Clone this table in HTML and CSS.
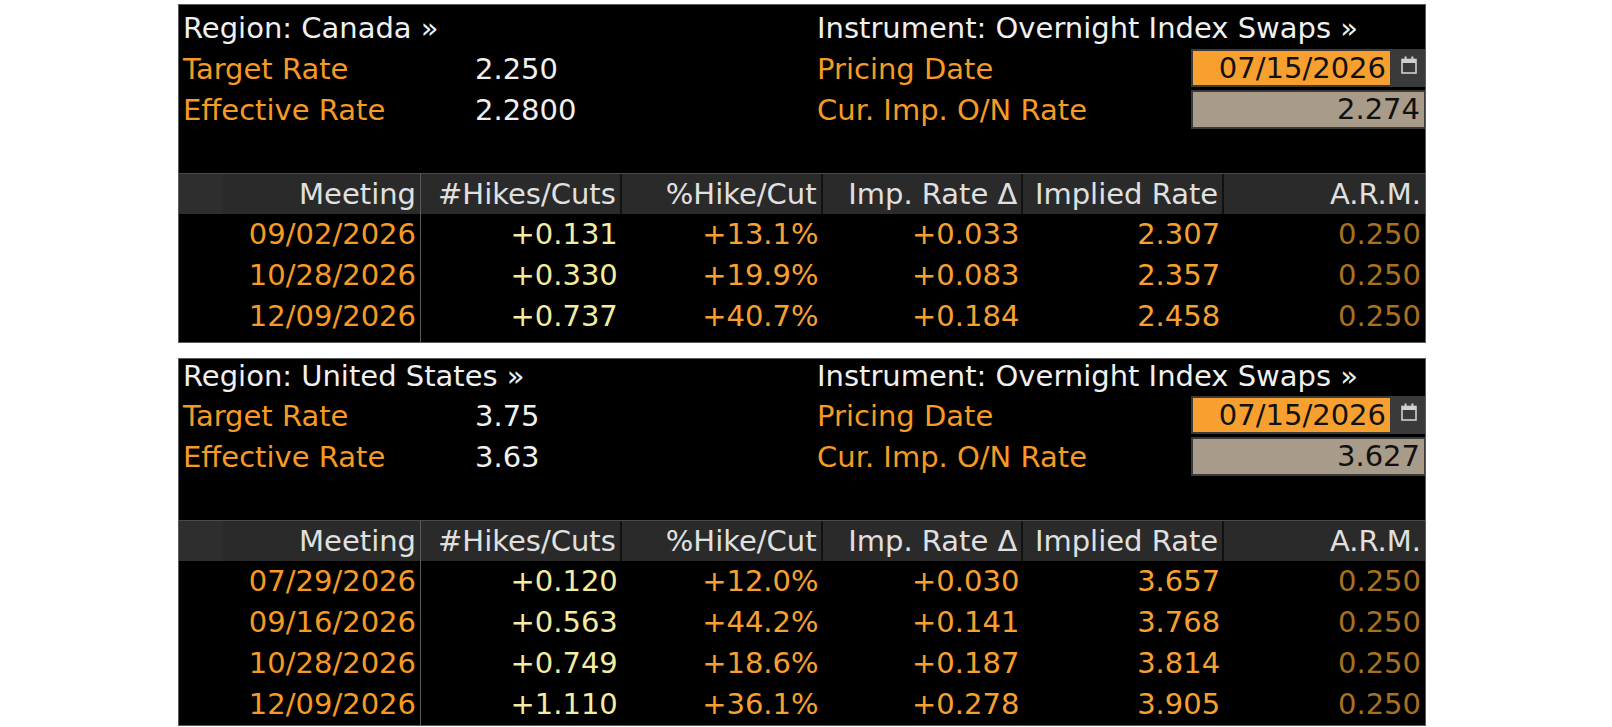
FILE: index.html
```html
<!DOCTYPE html>
<html>
<head>
<meta charset="utf-8">
<link rel="stylesheet" href="styles.css">
</head>
<body>
<div class="page">
  <section class="panel panel-first">
    <div class="info">
      <div class="cell head span2 white">Region: Canada »</div>
      <div class="cell head span2 white">Instrument: Overnight Index Swaps »</div>
      <div class="cell row orange">Target Rate</div>
      <div class="cell row white">2.250</div>
      <div class="cell row orange">Pricing Date</div>
      <div class="cell row boxes">
        <div class="datebox">07/15/2026</div>
        <div class="cal"><svg width="16" height="18" viewBox="0 0 16 18"><rect x="1" y="3.5" width="14" height="13.5" fill="none" stroke="#d0d0d0" stroke-width="1.6"/><rect x="1" y="3.5" width="14" height="3.5" fill="#d0d0d0"/><rect x="3.6" y="0.5" width="2" height="4" fill="#d0d0d0"/><rect x="10.4" y="0.5" width="2" height="4" fill="#d0d0d0"/></svg></div>
      </div>
      <div class="cell row orange">Effective Rate</div>
      <div class="cell row white">2.2800</div>
      <div class="cell row orange">Cur. Imp. O/N Rate</div>
      <div class="cell row boxes"><div class="greybox">2.274</div></div>
    </div>
    <div class="table">
      <div class="thead">
        <div class="th first">Meeting</div>
        <div class="th">#Hikes/Cuts</div>
        <div class="th">%Hike/Cut</div>
        <div class="th">Imp. Rate Δ</div>
        <div class="th">Implied Rate</div>
        <div class="th last">A.R.M.</div>
      </div>
      <div class="tbody">
        <div class="tr"><div class="td date">09/02/2026</div><div class="td yel">+0.131</div><div class="td org">+13.1%</div><div class="td org">+0.033</div><div class="td org">2.307</div><div class="td arm">0.250</div></div>
        <div class="tr"><div class="td date">10/28/2026</div><div class="td yel">+0.330</div><div class="td org">+19.9%</div><div class="td org">+0.083</div><div class="td org">2.357</div><div class="td arm">0.250</div></div>
        <div class="tr"><div class="td date">12/09/2026</div><div class="td yel">+0.737</div><div class="td org">+40.7%</div><div class="td org">+0.184</div><div class="td org">2.458</div><div class="td arm">0.250</div></div>
      </div>
    </div>
  </section>

  <section class="panel panel-second">
    <div class="info">
      <div class="cell head span2 white">Region: United States »</div>
      <div class="cell head span2 white">Instrument: Overnight Index Swaps »</div>
      <div class="cell row orange">Target Rate</div>
      <div class="cell row white">3.75</div>
      <div class="cell row orange">Pricing Date</div>
      <div class="cell row boxes">
        <div class="datebox">07/15/2026</div>
        <div class="cal"><svg width="16" height="18" viewBox="0 0 16 18"><rect x="1" y="3.5" width="14" height="13.5" fill="none" stroke="#d0d0d0" stroke-width="1.6"/><rect x="1" y="3.5" width="14" height="3.5" fill="#d0d0d0"/><rect x="3.6" y="0.5" width="2" height="4" fill="#d0d0d0"/><rect x="10.4" y="0.5" width="2" height="4" fill="#d0d0d0"/></svg></div>
      </div>
      <div class="cell row orange">Effective Rate</div>
      <div class="cell row white">3.63</div>
      <div class="cell row orange">Cur. Imp. O/N Rate</div>
      <div class="cell row boxes"><div class="greybox">3.627</div></div>
    </div>
    <div class="table">
      <div class="thead">
        <div class="th first">Meeting</div>
        <div class="th">#Hikes/Cuts</div>
        <div class="th">%Hike/Cut</div>
        <div class="th">Imp. Rate Δ</div>
        <div class="th">Implied Rate</div>
        <div class="th last">A.R.M.</div>
      </div>
      <div class="tbody">
        <div class="tr"><div class="td date">07/29/2026</div><div class="td yel">+0.120</div><div class="td org">+12.0%</div><div class="td org">+0.030</div><div class="td org">3.657</div><div class="td arm">0.250</div></div>
        <div class="tr"><div class="td date">09/16/2026</div><div class="td yel">+0.563</div><div class="td org">+44.2%</div><div class="td org">+0.141</div><div class="td org">3.768</div><div class="td arm">0.250</div></div>
        <div class="tr"><div class="td date">10/28/2026</div><div class="td yel">+0.749</div><div class="td org">+18.6%</div><div class="td org">+0.187</div><div class="td org">3.814</div><div class="td arm">0.250</div></div>
        <div class="tr"><div class="td date">12/09/2026</div><div class="td yel">+1.110</div><div class="td org">+36.1%</div><div class="td org">+0.278</div><div class="td org">3.905</div><div class="td arm">0.250</div></div>
      </div>
    </div>
  </section>
</div>
</body>
</html>
```

FILE: styles.css
```css
html, body {
  margin: 0;
  padding: 0;
  background: #ffffff;
}
body {
  font-family: "DejaVu Sans", "Liberation Sans", sans-serif;
  font-size: 29px;
}
.page {
  padding: 4px 0 0 178px;
  display: flex;
  flex-direction: column;
  gap: 15px;
}
.panel {
  width: 1248px;
  box-sizing: border-box;
  background: #000;
  border: 1px solid #5c5c5c;
  overflow: hidden;
}
.panel-first {
  padding-bottom: 5px;
}
.panel-first .info {
  padding-top: 6px;
}
.info {
  display: grid;
  grid-template-columns: 292px 342px 378px 229px;
  padding: 0 1px 0 4px;
}
.cell {
  white-space: nowrap;
}
.head {
  line-height: 34px;
  padding-bottom: 3.5px;
}
.span2 {
  grid-column: span 2;
}
.row {
  height: 41px;
  line-height: 41px;
}
.white { color: #f0f0f0; }
.orange { color: #f59b25; }
.boxes {
  display: flex;
  align-items: flex-start;
  margin-left: -4px;
  margin-right: -2px;
}
.datebox {
  width: 201px;
  height: 38px;
  box-sizing: border-box;
  background: #f7a030;
  border: 2px solid #3a3a3a;
  color: #111;
  text-align: right;
  line-height: 34px;
  padding-right: 4px;
}
.cal {
  flex: 1;
  height: 38px;
  background: #3a3a3a;
  display: flex;
  align-items: center;
  justify-content: center;
}
.cal svg {
  display: block;
  margin-top: -6px;
}
.greybox {
  flex: 1;
  height: 39px;
  box-sizing: border-box;
  background: #a89b89;
  border: 2px solid #3a3a3a;
  color: #111;
  text-align: right;
  line-height: 35px;
  padding-right: 4px;
}
.table {
  margin-top: 42px;
}
.thead, .tr {
  display: grid;
  grid-template-columns: 242px repeat(5, 1fr);
}
.thead {
  background: #2a2a2a;
  border-top: 1px solid #4a4a4a;
  height: 40px;
}
.th {
  color: #e0e0e0;
  line-height: 40px;
  text-align: right;
  padding-right: 4px;
  border-right: 2px solid #111;
  white-space: nowrap;
}
.th.first {
  border-right: 1px solid #5a5a5a;
  background: linear-gradient(to right, #2e2e2e 0, #2e2e2e 44px, #2a2a2a 44px);
}
.th.last {
  border-right: none;
}
.tbody {
  background: linear-gradient(#5a5a5a, #5a5a5a) 241px 0 / 1px 100% no-repeat;
}
.panel-first .tbody {
  padding-bottom: 5px;
  margin-bottom: -5px;
}
.td {
  line-height: 41px;
  height: 41px;
  text-align: right;
  padding-right: 4px;
  white-space: nowrap;
}
.td.date { padding-right: 5px; color: #f59b25; }
.yel { color: #f3eda2; }
.org { color: #f7a032; }
.arm { color: #a8711f; }
```
